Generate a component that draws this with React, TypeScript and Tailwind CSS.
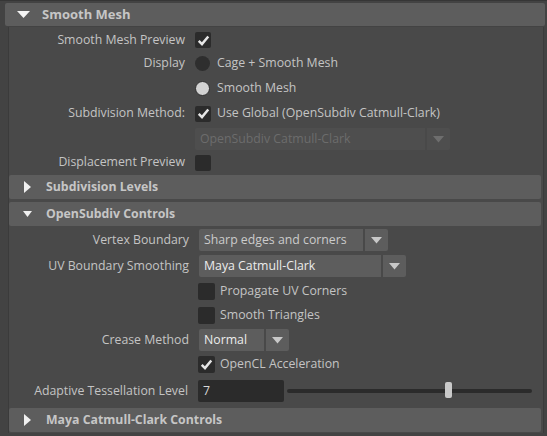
import React from "react";

const FONT = { fontFamily: '"Open Sans", "Noto Sans", sans-serif' };

function Check({ on, big }: { on?: boolean; big?: boolean }) {
  return (
    <div
      className={`flex shrink-0 items-center justify-center rounded-[2px] bg-[#2b2b2b] ${
        big ? "h-[17px] w-[17px]" : "h-[16px] w-[16px]"
      }`}
    >
      {on && (
        <svg width="13" height="13" viewBox="0 0 12 12">
          <path d="M1.6 6.3 L4.6 9.3 L10.4 2.3" fill="none" stroke="#e6e6e6" strokeWidth="2.3" />
        </svg>
      )}
    </div>
  );
}

function Radio({ on }: { on?: boolean }) {
  return (
    <div
      className={`h-[15px] w-[15px] shrink-0 rounded-full ${
        on ? "border border-[#2e2e2e] bg-[#d2d2d2]" : "bg-[#2e2e2e]"
      }`}
    />
  );
}

function Arrow({ dim }: { dim?: boolean }) {
  return (
    <svg width="11" height="7" viewBox="0 0 11 7">
      <path d="M0 0 H11 L5.5 6.5 Z" fill={dim ? "#6e6e6e" : "#c8c8c8"} />
    </svg>
  );
}

function Dropdown({
  text,
  w,
  dim,
  bright,
}: {
  text: string;
  w: string;
  dim?: boolean;
  bright?: boolean;
}) {
  return (
    <div className="flex h-[22px] gap-[2px]">
      <div
        className={`flex h-full items-center rounded-l-[2px] pl-[5px] ${w} ${
          dim ? "bg-[#4e4e4e] text-[#6c6c6c]" : "bg-[#5d5d5d]"
        } ${bright ? "text-[#ececec]" : dim ? "" : "text-[#cbcbcb]"}`}
      >
        {text}
      </div>
      <div
        className={`flex h-full w-[23px] items-center justify-center rounded-r-[2px] ${
          dim ? "bg-[#4e4e4e]" : "bg-[#5d5d5d]"
        }`}
      >
        <Arrow dim={dim} />
      </div>
    </div>
  );
}

function Row({
  label,
  h,
  lw,
  children,
  className = "",
}: {
  label?: string;
  h: string;
  lw: string;
  children: React.ReactNode;
  className?: string;
}) {
  return (
    <div className={`flex items-center ${h} ${className}`}>
      <div className={`shrink-0 pr-[10px] text-right ${lw}`}>{label}</div>
      {children}
    </div>
  );
}

function Header({
  title,
  open,
  className = "",
}: {
  title: string;
  open?: boolean;
  className?: string;
}) {
  return (
    <div
      className={`flex h-[24px] items-center rounded-[2px] bg-[#5d5d5d] font-bold text-[#c6c6c6] ${className}`}
    >
      <div className="flex w-[37px] justify-center">
        {open ? (
          <svg width="9" height="6" viewBox="0 0 9 6">
            <path d="M0 0 H9 L4.5 6 Z" fill="#f0f0f0" />
          </svg>
        ) : (
          <svg width="7" height="12" viewBox="0 0 7 12">
            <path d="M0 0 L7 6 L0 12 Z" fill="#f0f0f0" />
          </svg>
        )}
      </div>
      <span>{title}</span>
    </div>
  );
}

export default function App() {
  const top = "w-[186px]";
  const low = "w-[190px]";
  const box = "w-[189px]";
  return (
    <div
      className="h-[436px] w-[547px] overflow-hidden border-t border-[#363636] bg-[#434343] text-[12.3px] text-[#c4c4c4]"
      style={FONT}
    >
      <div className="pt-[2px] pl-[5px] pr-[2px]">
        <div className="flex h-[23px] items-center rounded-[2px] bg-[#5d5d5d] font-bold text-[13px] text-[#c6c6c6]">
          <div className="flex w-[37px] justify-center">
            <svg width="13" height="7" viewBox="0 0 13 7">
              <path d="M0 0 H13 L6.5 7 Z" fill="#f4f4f4" />
            </svg>
          </div>
          <span>Smooth Mesh</span>
        </div>
      </div>

      <div className="ml-[8px] mr-[3px] mt-[1px] border-x border-[#3b3b3b] bg-[#494949]">
        <div className="flex flex-col pt-[1px]">
          <Row label="Smooth Mesh Preview" h="h-[24px]" lw={top}>
            <Check on />
          </Row>
          <Row label="Display" h="h-[23px]" lw={top}>
            <Radio />
            <span className="ml-[7px]">Cage + Smooth Mesh</span>
          </Row>
          <Row h="h-[26px]" lw={top}>
            <Radio on />
            <span className="ml-[7px]">Smooth Mesh</span>
          </Row>
          <Row label="Subdivision Method:" h="h-[25px]" lw={top}>
            <Check on />
            <span className="ml-[6px]">Use Global (OpenSubdiv Catmull-Clark)</span>
          </Row>
          <Row h="h-[22px]" lw={top} className="mt-[2px]">
            <Dropdown text="OpenSubdiv Catmull-Clark" w="w-[230px]" dim />
          </Row>
          <Row label="Displacement Preview" h="h-[25px]" lw={top}>
            <Check />
          </Row>
        </div>

        <div className="mr-[2px] flex flex-col">
          <Header title="Subdivision Levels" className="h-[23px]" />
          <Header title="OpenSubdiv Controls" open className="mt-[3px]" />
        </div>

        <div className="flex flex-col">
          <Row label="Vertex Boundary" h="h-[22px]" lw={low} className="mt-[3px]">
            <Dropdown text="Sharp edges and corners" w="w-[164px]" />
          </Row>
          <Row label="UV Boundary Smoothing" h="h-[23px]" lw={low} className="mt-[4px]">
            <div className="h-[23px]">
              <Dropdown text="Maya Catmull-Clark" w="w-[182px]" bright />
            </div>
          </Row>
          <Row h="h-[26px]" lw={box}>
            <Check big />
            <span className="ml-[5px]">Propagate UV Corners</span>
          </Row>
          <Row h="h-[23px]" lw={box}>
            <Check big />
            <span className="ml-[5px]">Smooth Triangles</span>
          </Row>
          <Row label="Crease Method" h="h-[22px]" lw={low} className="mt-[2px]">
            <Dropdown text="Normal" w="w-[65px]" bright />
          </Row>
          <Row h="h-[27px]" lw={box}>
            <Check on big />
            <span className="ml-[5px]">OpenCL Acceleration</span>
          </Row>
          <Row label="Adaptive Tessellation Level" h="h-[22px]" lw={box} className="mt-[2px]">
            <div className="flex h-[22px] w-[86px] shrink-0 items-center rounded-[2px] bg-[#2b2b2b] pl-[5px] text-[#d8d8d8]">
              7
            </div>
            <div className="relative ml-[3px] flex h-[22px] w-[245px] items-center">
              <div className="h-[4px] w-full rounded-full bg-[#2b2b2b]" />
              <div className="absolute left-[158px] top-[2px] h-[16px] w-[7px] rounded-[2px] bg-[#c9c9c9]" />
            </div>
          </Row>
        </div>

        <div className="mr-[2px] mt-[6px] pb-[1px]">
          <Header title="Maya Catmull-Clark Controls" />
        </div>
      </div>
    </div>
  );
}
